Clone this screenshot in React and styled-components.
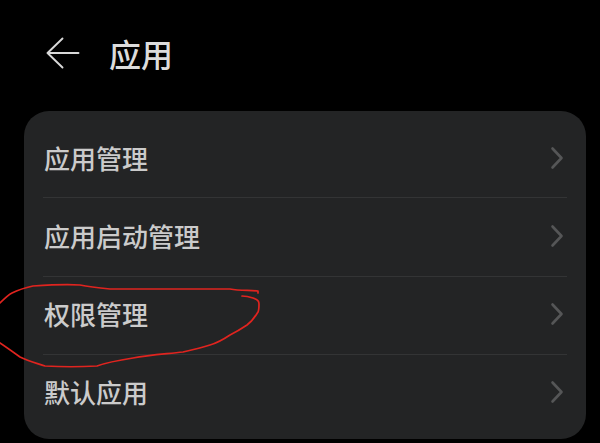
import React from "react";
import styled, { createGlobalStyle } from "styled-components";

const Global = createGlobalStyle`
  html, body { margin: 0; padding: 0; background: #000; }
  body { font-family: "Noto Sans CJK SC", "Noto Sans", sans-serif; overflow: hidden; }
`;
const Page = styled.div`
  position: relative;
  width: 600px;
  height: 443px;
  background: #000;
  overflow: hidden;
  display: flex;
  flex-direction: column;
`;
const Header = styled.header`
  height: 111px;
  flex: none;
  box-sizing: border-box;
  padding: 0 0 6px 45px;
  display: flex;
  align-items: center;
  gap: 28px;
`;
const BackIcon = styled.svg`
  width: 36px;
  height: 36px;
  flex: none;
`;
const Title = styled.h1`
  margin: 0;
  font-size: 32px;
  line-height: 40px;
  font-weight: 500;
  color: #dcdcdc;
`;
const Card = styled.section`
  margin: 0 14px 0 24px;
  height: 328px;
  flex: none;
  background: #232425;
  border-radius: 25px;
  box-sizing: border-box;
  padding: 9px 19px 7px 19px;
  display: flex;
  flex-direction: column;
`;
const Row = styled.div`
  flex: 1;
  display: flex;
  align-items: center;
  justify-content: space-between;
  padding-bottom: 2px;
  box-sizing: border-box;
  border-bottom: ${(p) => (p.$last ? "none" : "1.5px solid #333435")};
`;
const Label = styled.span`
  font-size: 26px;
  line-height: 34px;
  font-weight: 500;
  color: #cbcbcb;
  margin-left: 1px;
`;
const Chevron = styled.svg`
  width: 14px;
  height: 24px;
  flex: none;
  margin-right: 3px;
`;
const Scribble = styled.svg`
  position: absolute;
  left: 0;
  top: 0;
  width: 600px;
  height: 443px;
  pointer-events: none;
`;

const items = ["应用管理", "应用启动管理", "权限管理", "默认应用"];

export default function App() {
  return (
    <Page>
      <Global />
      <Header>
        <BackIcon viewBox="0 0 36 36" fill="none" stroke="#d8d8d8" strokeWidth="1.9" strokeLinecap="round" strokeLinejoin="round">
          <path d="M2.5 18H33.5M17.5 3.5L2.5 18L17.5 32.5" />
        </BackIcon>
        <Title>应用</Title>
      </Header>
      <Card>
        {items.map((t, i) => (
          <Row key={t} $last={i === items.length - 1}>
            <Label>{t}</Label>
            <Chevron viewBox="0 0 14 24" fill="none" stroke="#555657" strokeWidth="2.6" strokeLinecap="round" strokeLinejoin="round">
              <path d="M2.5 2.5L11.5 12L2.5 21.5" />
            </Chevron>
          </Row>
        ))}
      </Card>
      <Scribble viewBox="0 0 600 443" fill="none" stroke="#e0241f" strokeWidth="1.7" strokeLinecap="round" strokeLinejoin="round">
        <path d="M0 303C4 299 8 295 12 293C18 290 24 288 33 286C48 285 66 284 80 285C90 287 100 288 110 289L230 289C240 291 250 290 258 291L258 293" />
        <path d="M242 296C246 296 250 297 253 298C258 300 259 301 259 304C259 308 259 310 258 312C255 317 251 322 247 325C241 329 236 332 230 335C224 339 217 343 210 345C201 348 192 350 183 352C166 354 150 355 133 358C120 360 108 362 97 366C80 367 62 367 45 366C36 363 28 361 20 357C13 352 6 347 0 343" />
      </Scribble>
    </Page>
  );
}
